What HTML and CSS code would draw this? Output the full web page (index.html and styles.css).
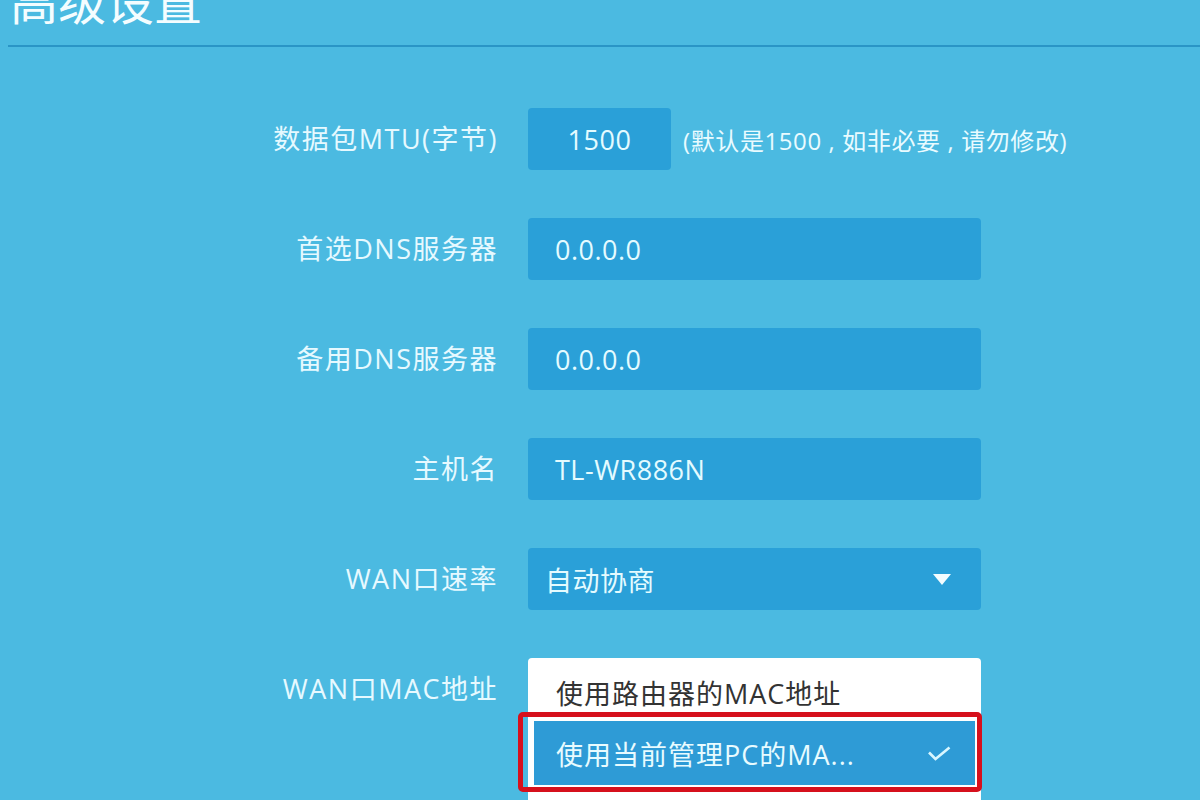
FILE: index.html
```html
<!DOCTYPE html>
<html lang="zh-CN">
<head>
<meta charset="utf-8">
<title>高级设置</title>
<link rel="stylesheet" href="styles.css">
</head>
<body>
<div class="page">
  <h1 class="title">高级设置</h1>
  <div class="rule"></div>
  <div class="form">
    <div class="label">数据包MTU(字节)</div>
    <div class="field field-inline">
      <div class="input input-short">1500</div>
      <span class="hint">(默认是1500 , 如非必要 , 请勿修改)</span>
    </div>

    <div class="label">首选DNS服务器</div>
    <div class="field"><div class="input">0.0.0.0</div></div>

    <div class="label">备用DNS服务器</div>
    <div class="field"><div class="input">0.0.0.0</div></div>

    <div class="label">主机名</div>
    <div class="field"><div class="input">TL-WR886N</div></div>

    <div class="label">WAN口速率</div>
    <div class="field">
      <div class="input select">
        <span>自动协商</span>
        <span class="caret"></span>
      </div>
    </div>

    <div class="label">WAN口MAC地址</div>
    <div class="field">
      <div class="dropdown">
        <div class="option">使用路由器的MAC地址</div>
        <div class="option selected">
          <span>使用当前管理PC的MA...</span>
          <svg class="check" width="24" height="15" viewBox="0 0 24 15"><path d="M2 6.5 L8.5 13 L22.5 1.5" fill="none" stroke="#d8f6ff" stroke-width="2.6"/></svg>
          <div class="highlight"></div>
        </div>
        <div class="option-rest"></div>
      </div>
    </div>
  </div>
</div>
</body>
</html>
```

FILE: styles.css
```css
html, body {
  margin: 0;
  padding: 0;
  height: 100%;
  overflow: hidden;
}
body {
  background: #4bbae1;
  font-family: "Open Sans", "Noto Sans CJK SC", sans-serif;
  color: #e9fbff;
}
.page {
  padding: 0 0 0 8px;
}
.title {
  margin: -30px 0 0 2px;
  font-family: "Noto Sans CJK SC", sans-serif;
  font-size: 48px;
  line-height: 58px;
  font-weight: 400;
  color: #f4fdff;
}
.rule {
  margin-top: 17px;
  height: 2px;
  background: #2a95c6;
}
.form {
  display: grid;
  grid-template-columns: 489px 453px;
  column-gap: 31px;
  row-gap: 48px;
  margin-top: 61px;
}
.label {
  justify-self: end;
  height: 62px;
  line-height: 62px;
  font-size: 27px;
  letter-spacing: 1.5px;
  margin-right: -1px;
  color: #e6f9ff;
  white-space: nowrap;
}
.field {
  display: flex;
  align-items: flex-start;
}
.field-inline {
  align-items: center;
  gap: 12px;
  height: 62px;
}
.input {
  box-sizing: border-box;
  flex-shrink: 0;
  width: 453px;
  height: 62px;
  background: #2aa0d8;
  border-radius: 4px;
  padding: 0 27px;
  display: flex;
  align-items: center;
  font-size: 27px;
  letter-spacing: 0.5px;
  color: #e4fbff;
}
.input-short {
  width: 143px;
  justify-content: center;
  padding: 0;
}
.hint {
  font-size: 24px;
  letter-spacing: 0.6px;
  color: #e9fbff;
  white-space: nowrap;
}
.select {
  padding: 0 30px 0 17px;
  justify-content: space-between;
}
.caret {
  width: 0;
  height: 0;
  border-left: 9px solid transparent;
  border-right: 9px solid transparent;
  border-top: 11px solid #f2fcff;
}
.dropdown {
  box-sizing: border-box;
  width: 453px;
  background: #ffffff;
  border-radius: 4px 4px 0 0;
  padding: 6px 6px 0 6px;
}
.option {
  position: relative;
  height: 57px;
  padding: 0 22px;
  display: flex;
  align-items: center;
  justify-content: space-between;
  font-size: 27px;
  letter-spacing: 1px;
  color: #333333;
  white-space: nowrap;
}
.option.selected {
  height: 64px;
  background: #2e9bd6;
  color: #e8fbff;
  padding-right: 24px;
}
.option-rest {
  height: 40px;
}
.check {
  display: block;
}
.highlight {
  position: absolute;
  left: -16px;
  right: -7px;
  top: -9px;
  bottom: -7px;
  border: 5px solid #d6101c;
  border-radius: 5px;
  pointer-events: none;
}
```
